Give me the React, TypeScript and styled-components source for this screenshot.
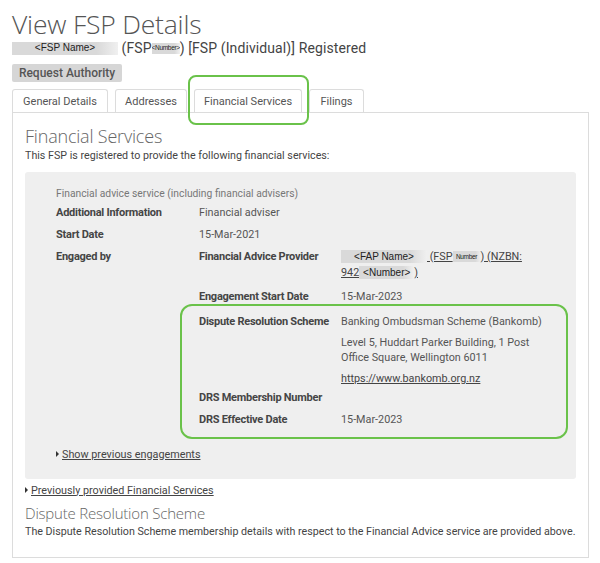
import styled, { createGlobalStyle } from "styled-components";

const GlobalStyle = createGlobalStyle`
  body {
    margin: 0;
    background: #fff;
    font-family: Roboto, "Liberation Sans", sans-serif;
    color: #4a4a4a;
  }
`;

const Page = styled.div`
  width: 600px;
  padding: 0 11px 0 12px;
  box-sizing: border-box;
`;

const Title = styled.h1`
  margin: 0;
  padding-top: 8px;
  font-family: "Open Sans", sans-serif;
  font-weight: 300;
  font-size: 26.5px;
  line-height: 32px;
  color: #555;
  letter-spacing: -0.2px;
`;

const SubTitle = styled.div`
  display: flex;
  align-items: center;
  font-size: 14px;
  letter-spacing: 0.1px;
  line-height: 16px;
  color: #444;
  white-space: nowrap;
`;

const Redacted = styled.span<{ $w: number; $small?: boolean }>`
  display: inline-flex;
  align-items: center;
  justify-content: center;
  overflow: hidden;
  width: ${(p) => p.$w}px;
  height: ${(p) => (p.$small ? 11 : 13)}px;
  background: linear-gradient(to right, #d9d9d9 0%, #d9d9d9 80%, #f0f0f0 100%);
  font-family: "Liberation Sans", Arial, sans-serif;
  font-size: ${(p) => (p.$small ? 6.5 : 10)}px;
  letter-spacing: ${(p) => (p.$small ? -0.3 : 0)}px;
  color: #222;
  vertical-align: middle;
  white-space: nowrap;
`;

const AuthorityButton = styled.button`
  display: block;
  margin-top: 8px;
  width: 110px;
  height: 18px;
  padding: 0;
  border: none;
  border-radius: 2px;
  background: #d6d6d6;
  color: #555;
  font-family: Roboto, sans-serif;
  font-size: 12px;
  font-weight: 500;
  white-space: nowrap;
`;

const TabBar = styled.div`
  display: flex;
  gap: 7px;
  margin-top: 7px;
  height: 23px;
`;

const Tab = styled.div<{ $w: number; $highlight?: boolean }>`
  position: relative;
  width: ${(p) => p.$w}px;
  box-sizing: border-box;
  border: 1px solid #dcdcdc;
  border-bottom: none;
  border-radius: 3px 3px 0 0;
  background: #fff;
  display: flex;
  align-items: center;
  justify-content: center;
  font-size: 11px;
  color: #555;
  white-space: nowrap;
  ${(p) =>
    p.$highlight &&
    `
    &::after {
      content: "";
      position: absolute;
      left: -7px;
      right: -8px;
      top: -15px;
      bottom: -13px;
      border: 2px solid #6ac24a;
      border-radius: 8px;
    }
  `}
`;

const Panel = styled.div`
  border: 1px solid #dcdcdc;
  padding: 12px 12px 18px 12px;
  font-size: 10.8px;
  line-height: 15px;
`;

const SectionTitle = styled.h2<{ $size: number }>`
  margin: 0;
  font-family: "Open Sans", sans-serif;
  font-weight: 300;
  font-size: ${(p) => p.$size}px;
  line-height: ${(p) => p.$size + 4}px;
  letter-spacing: -0.2px;
  color: #666;
`;

const Intro = styled.p`
  margin: 1px 0 0 0;
  font-size: 10.7px;
  color: #444;
  white-space: nowrap;
`;

const ServiceBox = styled.div`
  margin-top: 9px;
  background: #efefef;
  border-radius: 3px;
  padding: 14px 20px 17px 31px;
`;

const ServiceName = styled.div`
  font-size: 10.3px;
  color: #777;
`;

const Row = styled.div<{ $label: number }>`
  display: grid;
  grid-template-columns: ${(p) => p.$label}px 1fr;
  padding: 3.5px 0;
`;

const Label = styled.div`
  font-weight: 700;
  font-size: 11px;
  letter-spacing: -0.25px;
  color: #454545;
  white-space: nowrap;
`;

const Value = styled.div`
  color: #555;
`;

const Para = styled.p`
  margin: 0 0 6px 0;
  &:last-child {
    margin-bottom: 0;
  }
`;

const LinkText = styled.a`
  color: #444;
  text-decoration: underline;
  cursor: pointer;
`;

const Highlight = styled.div`
  margin: 0 -12px 0 -19px;
  padding: 5px 12px 7px 17px;
  border: 2px solid #6ac24a;
  border-radius: 12px;
`;

const Toggle = styled.div<{ $top: number }>`
  margin-top: ${(p) => p.$top}px;
  display: flex;
  align-items: center;
  gap: 3px;
  &::before {
    content: "";
    border-left: 3px solid #333;
    border-top: 3px solid transparent;
    border-bottom: 3px solid transparent;
  }
`;

export default function App() {
  return (
    <Page>
      <GlobalStyle />
      <Title>View FSP Details</Title>
      <SubTitle>
        <Redacted $w={106}>&lt;FSP Name&gt;</Redacted>
        &nbsp;(FSP<Redacted $w={28} $small>&lt;Number&gt;</Redacted>) [FSP (Individual)] Registered
      </SubTitle>
      <AuthorityButton>Request Authority</AuthorityButton>
      <TabBar>
        <Tab $w={96}>General Details</Tab>
        <Tab $w={72}>Addresses</Tab>
        <Tab $w={108} $highlight>Financial Services</Tab>
        <Tab $w={55}>Filings</Tab>
      </TabBar>
      <Panel>
        <SectionTitle $size={18}>Financial Services</SectionTitle>
        <Intro>This FSP is registered to provide the following financial services:</Intro>
        <ServiceBox>
          <ServiceName>Financial advice service (including financial advisers)</ServiceName>
          <Row $label={143}>
            <Label>Additional Information</Label>
            <Value>Financial adviser</Value>
          </Row>
          <Row $label={143}>
            <Label>Start Date</Label>
            <Value>15-Mar-2021</Value>
          </Row>
          <Row $label={143}>
            <Label>Engaged by</Label>
            <div>
              <Row $label={142} style={{ padding: 0 }}>
                <Label>Financial Advice Provider</Label>
                <Value style={{ lineHeight: "16px" }}>
                  <LinkText>
                    <Redacted $w={86}>&lt;FAP Name&gt;</Redacted>
                    &nbsp;(FSP<Redacted $w={28} $small>Number</Redacted>) (NZBN:
                    <br />
                    942<Redacted $w={55}>&lt;Number&gt;</Redacted>)
                  </LinkText>
                </Value>
              </Row>
              <Row $label={142} style={{ paddingBottom: 0, paddingTop: 8 }}>
                <Label>Engagement Start Date</Label>
                <Value>15-Mar-2023</Value>
              </Row>
              <Highlight>
                <Row $label={142} style={{ paddingBottom: 0 }}>
                  <Label>Dispute Resolution Scheme</Label>
                  <Value>
                    <Para>Banking Ombudsman Scheme (Bankomb)</Para>
                    <Para>
                      Level 5, Huddart Parker Building, 1 Post
                      <br />
                      Office Square, Wellington 6011
                    </Para>
                    <Para>
                      <LinkText>https://www.bankomb.org.nz</LinkText>
                    </Para>
                  </Value>
                </Row>
                <Row $label={142}>
                  <Label>DRS Membership Number</Label>
                  <Value></Value>
                </Row>
                <Row $label={142}>
                  <Label>DRS Effective Date</Label>
                  <Value>15-Mar-2023</Value>
                </Row>
              </Highlight>
            </div>
          </Row>
          <Toggle $top={4}>
            <LinkText>Show previous engagements</LinkText>
          </Toggle>
        </ServiceBox>
        <Toggle $top={4}>
          <LinkText>Previously provided Financial Services</LinkText>
        </Toggle>
        <div style={{ height: 6 }} />
        <SectionTitle $size={15}>Dispute Resolution Scheme</SectionTitle>
        <Intro>
          The Dispute Resolution Scheme membership details with respect to the Financial Advice service are provided above.
        </Intro>
      </Panel>
    </Page>
  );
}
